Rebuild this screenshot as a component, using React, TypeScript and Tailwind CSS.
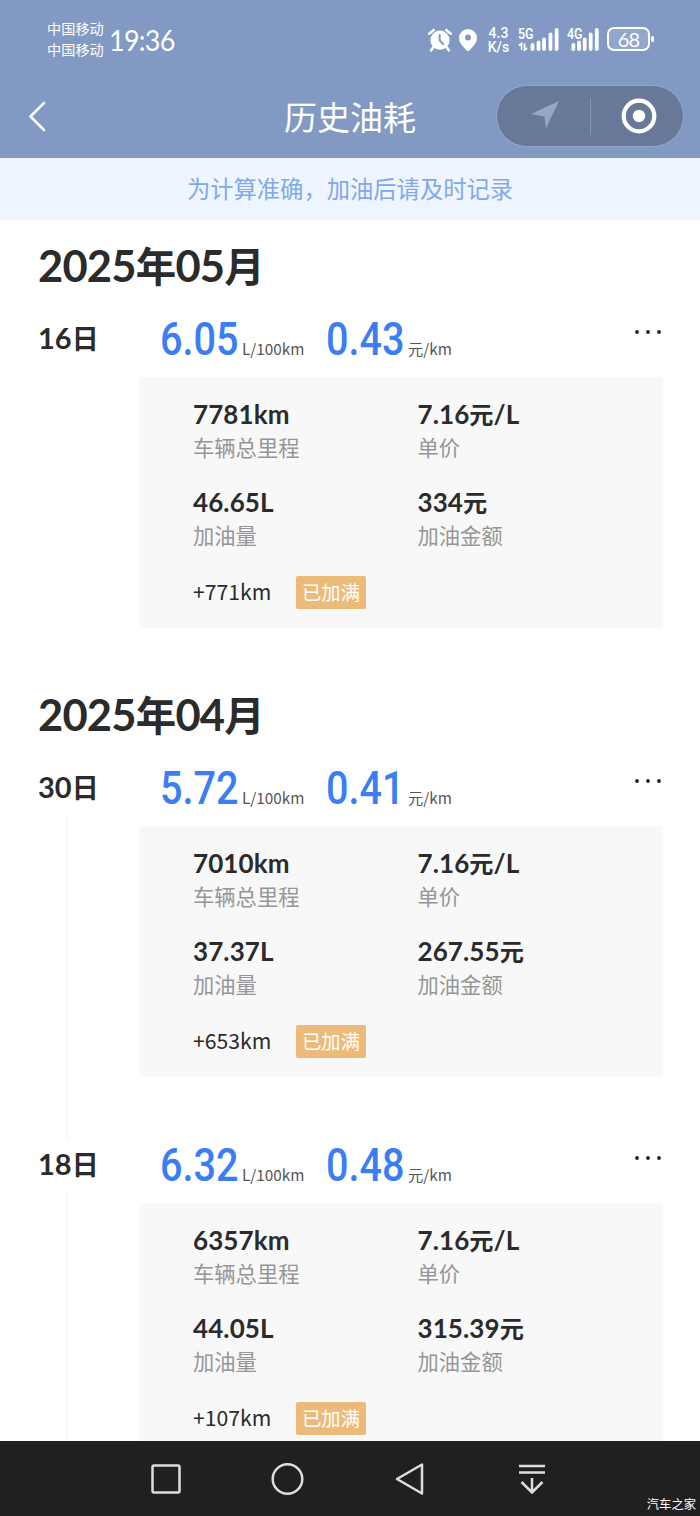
import { Fragment } from "react";

type FuelRecord = {
  day: string;
  consumption: string;
  cost: string;
  mileage: string;
  price: string;
  volume: string;
  amount: string;
  distance: string;
  line?: boolean;
};

type MonthGroup = {
  month: string;
  records: FuelRecord[];
};

const groups: MonthGroup[] = [
  {
    month: "2025年05月",
    records: [
      {
        day: "16日",
        consumption: "6.05",
        cost: "0.43",
        mileage: "7781km",
        price: "7.16元/L",
        volume: "46.65L",
        amount: "334元",
        distance: "+771km",
      },
    ],
  },
  {
    month: "2025年04月",
    records: [
      {
        day: "30日",
        consumption: "5.72",
        cost: "0.41",
        mileage: "7010km",
        price: "7.16元/L",
        volume: "37.37L",
        amount: "267.55元",
        distance: "+653km",
        line: true,
      },
      {
        day: "18日",
        consumption: "6.32",
        cost: "0.48",
        mileage: "6357km",
        price: "7.16元/L",
        volume: "44.05L",
        amount: "315.39元",
        distance: "+107km",
        line: true,
      },
    ],
  },
];

// Chinese characters are set a little smaller than the digits next to them
function Mixed({ text }: { text: string }) {
  return (
    <>
      {text.split(/([\u4e00-\u9fff]+)/).map((part, i) =>
        i % 2 === 1 ? (
          <span key={i} className="text-[0.93em]">
            {part}
          </span>
        ) : (
          <Fragment key={i}>{part}</Fragment>
        )
      )}
    </>
  );
}

type SignalProps = {
  label: string;
  bars: number[];
  width: number;
  arrows?: boolean;
};

function Signal({ label, bars, width, arrows }: SignalProps) {
  const tops = [17, 14.5, 11.5, 6.5, 1.8];
  return (
    <svg width={width} height="26" viewBox={`0 0 ${width} 26`} className="shrink-0">
      <text
        x="0"
        y="11.8"
        textLength="15.5"
        lengthAdjust="spacingAndGlyphs"
        fill="white"
        className="font-['Roboto'] text-[14px] font-semibold"
      >
        {label}
      </text>
      {bars.map((x, i) => (
        <path
          key={x}
          d={`M${x} ${tops[i] + 1}V22`}
          stroke="white"
          strokeWidth="3.8"
          strokeLinecap="round"
        />
      ))}
      {arrows && (
        <path
          d="M1 18.5L3.6 16.5V23M6.6 16.5V23L9.2 21"
          fill="none"
          stroke="white"
          strokeWidth="1.7"
        />
      )}
    </svg>
  );
}

function StatusBar() {
  return (
    <div className="flex h-[75px] items-start text-white">
      <div className="ml-[47px] mt-[18px] w-[58px] whitespace-nowrap text-[14.2px] leading-[21px]">
        <p>中国移动</p>
        <p>中国移动</p>
      </div>
      <p className="ml-[4px] mt-[22px] w-[70px] origin-left scale-x-[0.93] whitespace-nowrap font-['Lato'] text-[29px] leading-9 tracking-[-0.8px]">
        19:36
      </p>
      <div className="ml-auto mr-[45px] mt-[27px] flex items-start">
        <svg width="24" height="26" viewBox="0 0 24 26">
          <circle cx="12" cy="13.2" r="9.6" fill="white" />
          <path
            d="M1.2 6.8L5.8 3M22.8 6.8L18.2 3M5.5 20L3 23.5M18.5 20L21 23.5"
            stroke="white"
            strokeWidth="2.4"
            strokeLinecap="round"
          />
          <path d="M11.7 8V13.5L15.2 17" fill="none" stroke="#8199c3" strokeWidth="2" strokeLinecap="round" />
        </svg>
        <svg width="18" height="26" viewBox="0 0 18 26" className="ml-[7px]">
          <path
            fillRule="evenodd"
            d="M9 2A9 9 0 0 1 18 11C18 16 13.5 20 10.4 23.4Q9 24.6 7.6 23.4C4.5 20 0 16 0 11A9 9 0 0 1 9 2ZM9 7.6A3 3 0 1 0 9 13.6A3 3 0 1 0 9 7.6Z"
            fill="white"
          />
        </svg>
        <div className="-mt-px ml-[10px] w-[23px] text-center font-['Roboto'] text-[14px] font-medium leading-[14px]">
          <p>4.3</p>
          <p>K/s</p>
        </div>
        <div className="ml-[8px] flex">
          <Signal label="5G" bars={[14.5, 20.5, 26, 32.5, 38.6]} width={42} arrows />
        </div>
        <div className="ml-[7px] flex">
          <Signal label="4G" bars={[6.3, 12, 17.7, 23.7, 29.8]} width={32} />
        </div>
        <div className="ml-[8px] flex h-[24px] w-[48px] items-center">
          <span className="flex h-[24px] w-[43px] items-center justify-center rounded-[7px] border-2 border-white bg-[#93a7cd] font-['Lato'] text-[20px] leading-[20px] tracking-[-0.8px]">
            68
          </span>
          <span className="ml-px h-[6px] w-[3px] rounded-full bg-white" />
        </div>
      </div>
    </div>
  );
}

function TitleBar() {
  return (
    <div className="relative flex h-[83px] items-center justify-center text-white">
      <button aria-label="返回" className="absolute left-[27px] top-[26px]">
        <svg width="20" height="32" viewBox="0 0 20 32" fill="none">
          <path d="M17 2L3.5 15.5L17 29" stroke="white" strokeWidth="2.5" strokeLinecap="round" strokeLinejoin="round" />
        </svg>
      </button>
      <h1 className="text-[33px] leading-[82px]">历史油耗</h1>
      <div className="absolute right-[16px] top-[10px] flex h-[62px] w-[188px] items-center rounded-full border-[1.5px] border-[#97a9cb] bg-[#687899]">
        <div className="flex flex-1 justify-center pl-[4px]">
          <svg width="28" height="28" viewBox="0 0 28 28" className="-mt-[2px]">
            <path d="M28 0L14.8 27.5L13.5 15.5L0 13Z" fill="#99a6c1" />
          </svg>
        </div>
        <div className="h-[37px] w-px bg-[#8796b3]" />
        <div className="flex flex-1 justify-center pl-[4px]">
          <svg width="36" height="36" viewBox="0 0 36 36">
            <circle cx="18" cy="18" r="15.3" fill="none" stroke="white" strokeWidth="4.2" />
            <circle cx="18" cy="18" r="6.2" fill="white" />
          </svg>
        </div>
      </div>
    </div>
  );
}

function Field({ value, label }: { value: string; label: string }) {
  return (
    <div className="h-[87.5px]">
      <p className="h-[36px] whitespace-nowrap text-[26px] font-bold leading-[36px] tracking-[0.1px]">
        <Mixed text={value} />
      </p>
      <p className="text-[21.3px] leading-[32px] text-[#969696]">{label}</p>
    </div>
  );
}

function BigNumber({ value }: { value: string }) {
  return (
    <span className="w-[81px] origin-left scale-x-[0.86] whitespace-nowrap font-['Roboto'] text-[46px] font-medium leading-[48px] text-[#3b7df2]">
      {value}
    </span>
  );
}

function Entry({ record }: { record: FuelRecord }) {
  return (
    <li className="flex h-[377px]">
      <div className="flex w-[101px] shrink-0 flex-col">
        <p className="h-[67px] pt-[18px] text-[29px] font-bold leading-[40px]">
          <Mixed text={record.day} />
        </p>
        {record.line && <div className="-mb-[14px] ml-[28px] w-[2px] flex-1 bg-[#f8f8f8]" />}
      </div>
      <div className="w-[524px] shrink-0">
        <div className="flex h-[77px] items-baseline pl-[21px] pt-[15px] font-['Noto_Sans_CJK_SC',sans-serif] text-[15.3px] leading-[20px] text-[#555]">
          <BigNumber value={record.consumption} />
          <span className="ml-px w-[84px]">L/100km</span>
          <BigNumber value={record.cost} />
          <span className="ml-px">元/km</span>
          <svg width="28" height="6" viewBox="0 0 28 6" className="ml-auto mr-px mt-[14px] self-start">
            <circle cx="3" cy="3" r="1.9" fill="#222" />
            <circle cx="14" cy="3" r="1.9" fill="#222" />
            <circle cx="25" cy="3" r="1.9" fill="#222" />
          </svg>
        </div>
        <div className="h-[251px] rounded-[4px] bg-[#f8f8f8] pl-[54px] pt-[19px]">
          <div className="grid grid-cols-[224.5px_1fr]">
            <Field value={record.mileage} label="车辆总里程" />
            <Field value={record.price} label="单价" />
            <Field value={record.volume} label="加油量" />
            <Field value={record.amount} label="加油金额" />
          </div>
          <div className="mt-[5px] flex items-start">
            <span className="w-[103px] font-['Noto_Sans_CJK_SC',sans-serif] text-[21.2px] leading-[30px]">
              {record.distance}
            </span>
            <span className="h-[33px] w-[70px] rounded-[2px] bg-[#edbb79] text-center text-[19.3px] leading-[33px] text-white">
              已加满
            </span>
          </div>
        </div>
      </div>
    </li>
  );
}

function NavBar() {
  return (
    <nav className="relative h-[75px] shrink-0 bg-[#202020] text-[#ddd]">
      <div className="flex h-full items-center pl-[150px]">
        <svg width="32" height="34" viewBox="0 0 32 34" fill="none" stroke="currentColor" strokeWidth="2.5">
          <rect x="2.5" y="3.5" width="27" height="27" rx="1.5" />
        </svg>
        <svg width="34" height="34" viewBox="0 0 34 34" fill="none" stroke="currentColor" strokeWidth="2.5" className="ml-[89px]">
          <circle cx="16.5" cy="17" r="14.8" />
        </svg>
        <svg width="32" height="34" viewBox="0 0 32 34" fill="none" stroke="currentColor" strokeWidth="2.5" strokeLinejoin="round" className="ml-[88px]">
          <path d="M29 2.5V31.5L4 17Z" />
        </svg>
        <svg width="28" height="34" viewBox="0 0 28 34" fill="none" stroke="currentColor" strokeWidth="2.5" className="ml-[93px]">
          <path d="M1 4H27M1 10.5H27M14 16V30M3.5 20L14 30.5L24.5 20" />
        </svg>
      </div>
      <span className="absolute bottom-[2px] right-[4px] text-[12.3px] leading-[18px] text-white">汽车之家</span>
    </nav>
  );
}

export default function App() {
  return (
    <div className="flex h-[1516px] w-[700px] flex-col overflow-hidden bg-white font-['Lato','Noto_Sans_CJK_SC',sans-serif] text-[#2b2b2b]">
      <header className="h-[158px] shrink-0 bg-[#8199c3]">
        <StatusBar />
        <TitleBar />
      </header>
      <p className="h-[62px] shrink-0 bg-[#eef5ff] text-center text-[23.3px] leading-[62px] text-[#80a8ea]">
        为计算准确，加油后请及时记录
      </p>
      <main className="min-h-0 flex-1 overflow-hidden pl-[38px] pt-2">
        {groups.map((group) => (
          <section key={group.month}>
            <h2 className="h-[72px] whitespace-nowrap text-[43.5px] font-bold leading-[74px] tracking-[-0.8px]">
              <Mixed text={group.month} />
            </h2>
            <ul>
              {group.records.map((record) => (
                <Entry key={record.day} record={record} />
              ))}
            </ul>
          </section>
        ))}
      </main>
      <NavBar />
    </div>
  );
}
